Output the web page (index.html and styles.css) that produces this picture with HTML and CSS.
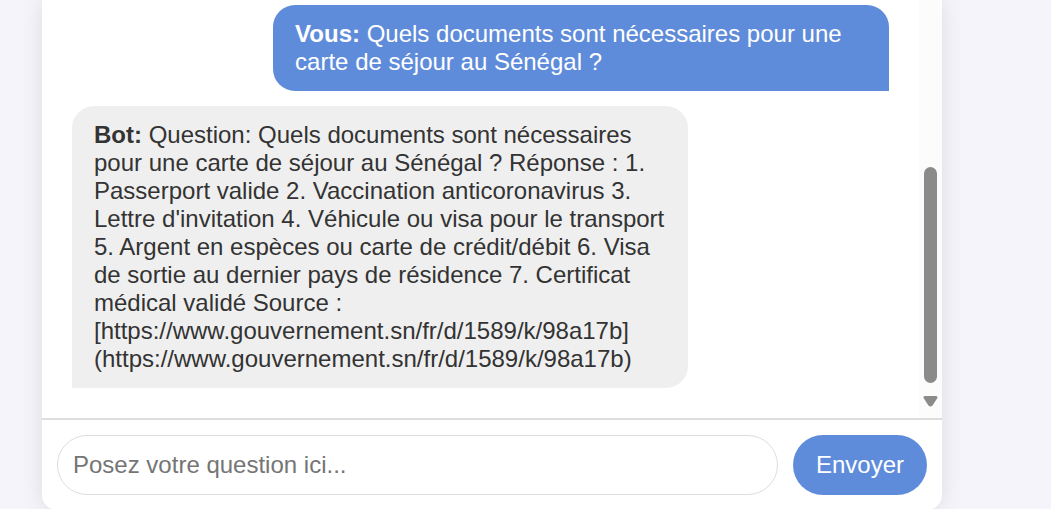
FILE: index.html
```html
<!DOCTYPE html>
<html lang="fr">
<head>
<meta charset="utf-8">
<meta name="viewport" content="width=device-width, initial-scale=1">
<title>Chat</title>
<link rel="stylesheet" href="styles.css">
</head>
<body>
<main class="chat">
  <div class="history">
    <div class="messages">
      <div class="message message-user"><strong>Vous:</strong> Quels documents sont nécessaires pour une carte de séjour au Sénégal ?</div>
      <div class="message message-bot"><strong>Bot:</strong> Question: Quels documents sont nécessaires pour une carte de séjour au Sénégal ? Réponse : 1. Passerport valide 2. Vaccination anticoronavirus 3. Lettre d'invitation 4. Véhicule ou visa pour le transport 5. Argent en espèces ou carte de crédit/débit 6. Visa de sortie au dernier pays de résidence 7. Certificat médical validé Source : [https://www.gouvernement.sn/fr/d/1589/k/98a17b](https://www.gouvernement.sn/fr/d/1589/k/98a17b)</div>
    </div>
    <div class="scrollbar" aria-hidden="true">
      <div class="thumb"></div>
      <svg class="arrow" width="15" height="11" viewBox="0 0 15 11"><path d="M2 1.500h11L8.300 8.600q-.8 1-1.600 0z"/></svg>
    </div>
  </div>
  <form class="composer">
    <input class="question" type="text" placeholder="Posez votre question ici..." aria-label="Posez votre question ici">
    <button class="send" type="button">Envoyer</button>
  </form>
</main>
</body>
</html>
```

FILE: styles.css
```css
body {
  margin: 0;
  overflow: hidden;
  background: #f4f4fa;
  color: #333;
  font: 24px/28px "Liberation Sans", Arial, sans-serif;
}

.chat {
  margin: 0 109px 0 42px;
  background: #fff;
  border-radius: 0 0 15px 15px;
  box-shadow: 0 0 22px rgba(0, 0, 0, 0.1);
}

.history {
  display: flex;
}

.messages {
  flex: 1;
  display: flex;
  flex-direction: column;
  gap: 15px;
  padding: 5px 30px 30px;
}

.message {
  max-width: 70%;
  padding: 15px 22px;
  border-radius: 22px;
}

.message-user {
  align-self: flex-end;
  background: #5f8cda;
  color: #fff;
  border-bottom-right-radius: 0;
}

.message-bot {
  align-self: flex-start;
  background: #efefef;
  border-bottom-left-radius: 0;
}

.scrollbar {
  display: flex;
  flex-direction: column;
  justify-content: flex-end;
  align-items: center;
  gap: 13px;
  width: 23px;
  padding-bottom: 11px;
  box-sizing: border-box;
  background: #fcfcfc;
}

.thumb {
  width: 13px;
  height: 216px;
  border-radius: 7px;
  background: #8b8b8b;
}

.arrow {
  fill: #8b8b8b;
  stroke: #8b8b8b;
  stroke-width: 3px;
  stroke-linejoin: round;
}

.composer {
  display: flex;
  gap: 15px;
  padding: 15px;
  border-top: 2px solid #ddd;
}

.question,
.send {
  height: 60px;
  box-sizing: border-box;
  border-radius: 30px;
  font: inherit;
}

.question {
  flex: 1;
  min-width: 0;
  padding: 0 15px;
  border: 1px solid #ddd;
  background: #fff;
  color: #333;
}

.question::placeholder {
  color: #757575;
}

.send {
  padding: 0 23px;
  border: 0;
  background: #5f8cda;
  color: #fff;
}
```
